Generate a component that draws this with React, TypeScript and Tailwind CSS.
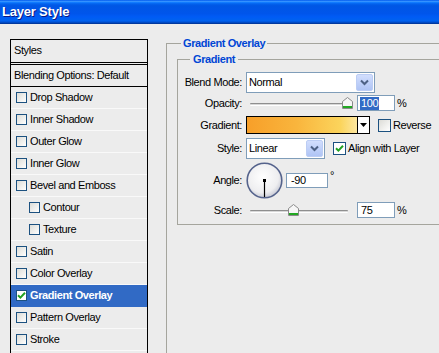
import React from "react";

const styleRows = [
  { label: "Drop Shadow" },
  { label: "Inner Shadow" },
  { label: "Outer Glow" },
  { label: "Inner Glow" },
  { label: "Bevel and Emboss" },
  { label: "Contour", indent: true },
  { label: "Texture", indent: true },
  { label: "Satin" },
  { label: "Color Overlay" },
  { label: "Gradient Overlay", selected: true },
  { label: "Pattern Overlay" },
  { label: "Stroke" },
];

function Check({ checked, size = 13 }: { checked?: boolean; size?: number }) {
  return (
    <span
      className={`flex shrink-0 items-center justify-center border border-[#1c5180] ${
        checked ? "bg-white" : "bg-linear-to-br from-[#dcdcd7] to-white"
      } ${size === 11 ? "w-[11px] h-[11px]" : "w-[13px] h-[13px]"}`}
    >
      {checked && (
        <svg width="9" height="9" viewBox="0 0 9 9">
          <path d="M1 4.2 L3.4 6.6 L8 1.8" fill="none" stroke="#21a121" strokeWidth="2" />
        </svg>
      )}
    </span>
  );
}

function Combo({ value, w }: { value: string; w: string }) {
  return (
    <div className={`${w} h-[21px] flex items-center border border-[#7f9db9] bg-white shrink-0`}>
      <span className="pl-[2px]">{value}</span>
      <span className="ml-auto mr-px h-[17px] w-[17px] flex items-center justify-center rounded-[2px] border border-[#bccdf4] bg-linear-to-b from-[#d2defd] to-[#afc4f5]">
        <svg width="9" height="7" viewBox="0 0 9 7">
          <path d="M1 1.5 L4.5 5 L8 1.5" fill="none" stroke="#4d6185" strokeWidth="2" />
        </svg>
      </span>
    </div>
  );
}

function Slider({ w, thumb }: { w: string; thumb: string }) {
  return (
    <div className={`relative ${w} h-[12px] shrink-0`}>
      <div className="absolute left-0 right-0 top-[6px] h-[3px] rounded-[1px] border-t border-b border-t-[#8f8f8f] border-b-white bg-[#d8d8d8]" />
      <svg className={`absolute top-0 ${thumb}`} width="11" height="12" viewBox="0 0 11 12">
        <path d="M0.5 4.5 L5.5 0.5 L10.5 4.5 V11.5 H0.5 Z" fill="#f6f6f6" stroke="#8a8a8a" />
        <rect x="1" y="9" width="9" height="2" fill="#22a822" />
      </svg>
    </div>
  );
}

function Label({ children }: { children: React.ReactNode }) {
  return <span className="w-[64px] shrink-0 text-right">{children}</span>;
}

export default function App() {
  return (
    <div className="w-[439px] h-[353px] overflow-hidden bg-[#ececec] font-['Liberation_Sans',Arial,sans-serif] text-[11px] tracking-[-0.4px] text-black">
      <div className="h-[24px] flex items-center pl-[2px] bg-[linear-gradient(to_bottom,#0058ee_0%,#3593ff_6%,#127dff_10%,#0262ee_16%,#0057e5_24%,#0055eb_56%,#005bf5_70%,#0062ef_86%,#0052d6_92%,#0040ab_96%,#003092_100%)]">
        <span className="text-[13px] font-bold tracking-[-0.2px] text-white [text-shadow:1px_1px_0_#0a1883]">
          Layer Style
        </span>
      </div>

      <div className="flex">
        <div className="ml-[10px] mt-[15px] w-[138px] h-[330px] shrink-0 border border-black">
          <div className="h-[23px] pb-[2px] flex items-center pl-[3px] border-b border-black">Styles</div>
          <div className="mt-px h-[23px] pb-px flex items-center pl-[3px] border-t border-b border-black">
            Blending Options: Default
          </div>
          {styleRows.map((r) => (
            <div
              key={r.label}
              className={`h-[22px] flex items-center gap-[3px] border-b ${
                r.selected ? "bg-[#316ac5] text-white font-bold border-[#316ac5]" : "border-[#f9f9f9]"
              } ${r.indent ? "pl-[18px]" : "pl-[5px]"}`}
            >
              <Check size={11} checked={r.selected} />
              <span>{r.label}</span>
            </div>
          ))}
        </div>

        <fieldset className="ml-[18px] mt-[12px] w-[300px] min-h-[340px] shrink-0 border-l border-t border-[#a5a59d] pl-[10px] pt-px">
          <legend className="ml-[4px] px-[2px] leading-[15px] font-bold text-[#0046d5]">Gradient Overlay</legend>
          <fieldset className="w-[290px] border border-[#a5a59d] pt-[5px] pb-[6px]">
            <legend className="ml-[12px] px-[3px] leading-[15px] font-bold text-[#0046d5]">Gradient</legend>

            <div className="h-[21px] flex items-center">
              <Label>Blend Mode:</Label>
              <div className="ml-[4px]">
                <Combo value="Normal" w="w-[129px]" />
              </div>
            </div>

            <div className="mt-[2px] h-[16px] flex items-center">
              <Label>Opacity:</Label>
              <div className="ml-[8px]">
                <Slider w="w-[101px]" thumb="left-[92px]" />
              </div>
              <div className="ml-[6px] w-[38px] h-[16px] flex items-center border border-[#7f9db9] bg-white pl-[2px]">
                <span className="bg-[#316ac5] text-white px-px leading-[13px]">100</span>
              </div>
              <span className="ml-[2px]">%</span>
            </div>

            <div className="mt-[5px] h-[18px] flex items-center">
              <Label>Gradient:</Label>
              <div className="ml-[4px] w-[124px] h-[18px] flex border border-black">
                <div className="flex-1 bg-[linear-gradient(to_right,#f79f29,#f9b53d_45%,#fbd45c_85%,#fde7a0)]" />
                <div className="w-[12px] flex items-center justify-center border-l border-black bg-white">
                  <svg width="7" height="4" viewBox="0 0 7 4">
                    <path d="M0 0 H7 L3.5 4 Z" fill="#000" />
                  </svg>
                </div>
              </div>
              <div className="ml-[8px]">
                <Check />
              </div>
              <span className="ml-[2px]">Reverse</span>
            </div>

            <div className="mt-[4px] h-[21px] flex items-center">
              <Label>Style:</Label>
              <div className="ml-[4px]">
                <Combo value="Linear" w="w-[79px]" />
              </div>
              <div className="ml-[8px]">
                <Check checked />
              </div>
              <span className="ml-[2px]">Align with Layer</span>
            </div>

            <div className="mt-[3px] h-[37px] flex items-center">
              <Label>Angle:</Label>
              <svg className="ml-[4px] shrink-0" width="37" height="37" viewBox="0 0 37 37">
                <defs>
                  <radialGradient id="dial" cx="0.45" cy="0.4" r="0.6">
                    <stop offset="0" stopColor="#ffffff" />
                    <stop offset="0.75" stopColor="#eeeef0" />
                    <stop offset="1" stopColor="#c9cbd6" />
                  </radialGradient>
                </defs>
                <circle cx="18.5" cy="18.5" r="17.3" fill="url(#dial)" stroke="#55638c" strokeWidth="1.6" />
                <line x1="18.5" y1="18.5" x2="18.5" y2="35" stroke="#000" strokeWidth="1.2" />
                <rect x="17" y="17" width="3" height="3" fill="#000" />
              </svg>
              <div className="ml-[3px] w-[42px] h-[15px] flex items-center border border-[#7f9db9] bg-white pl-[4px]">
                -90
              </div>
              <span className="ml-[2px] self-start mt-[8px] leading-[10px]">°</span>
            </div>

            <div className="mt-[3px] h-[16px] flex items-center">
              <Label>Scale:</Label>
              <div className="ml-[8px]">
                <Slider w="w-[98px]" thumb="left-[38px]" />
              </div>
              <div className="ml-[9px] w-[38px] h-[16px] flex items-center border border-[#7f9db9] bg-white pl-[3px]">
                75
              </div>
              <span className="ml-[2px]">%</span>
            </div>
          </fieldset>
        </fieldset>
      </div>
    </div>
  );
}
